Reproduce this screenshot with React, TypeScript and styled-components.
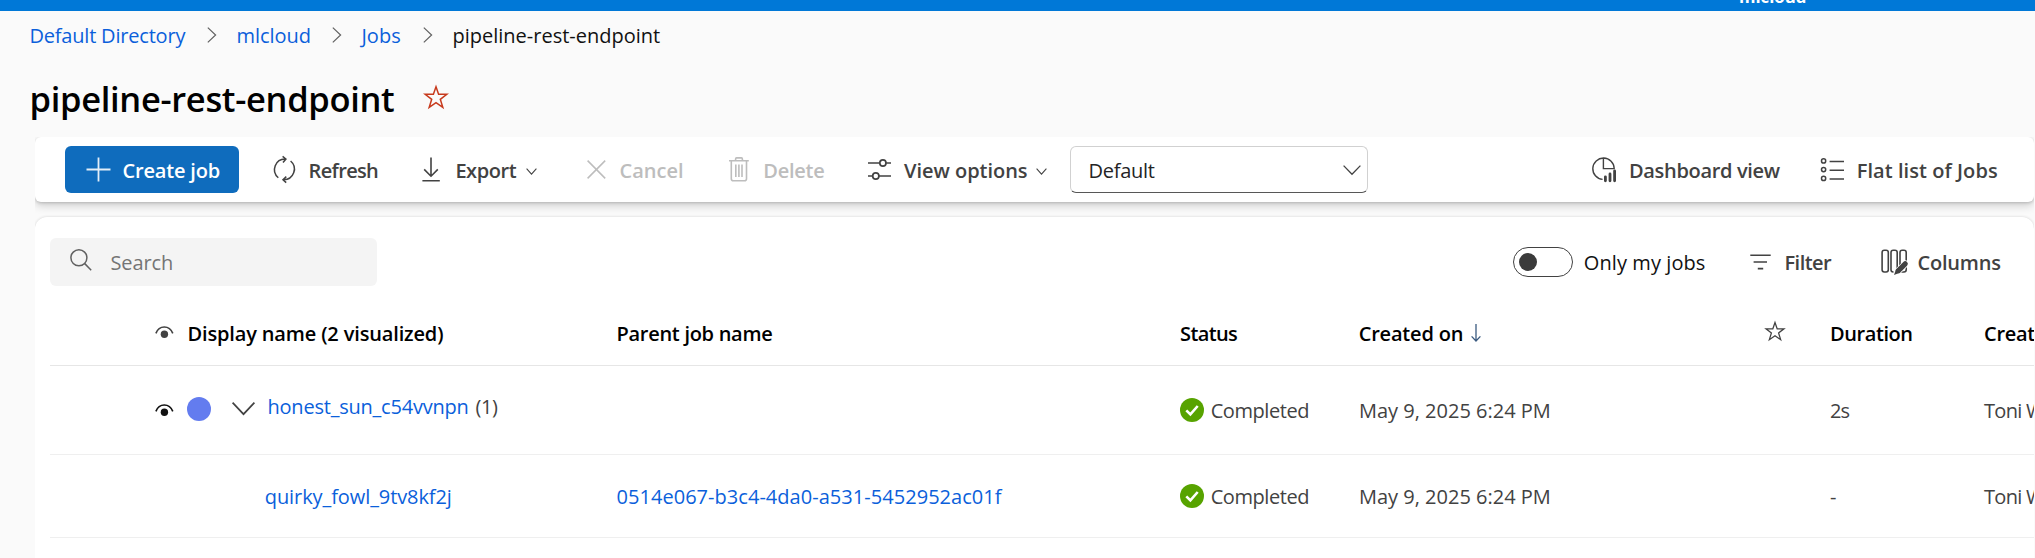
import React from "react";
import styled, { createGlobalStyle } from "styled-components";

const Global = createGlobalStyle`
  * { box-sizing: border-box; }
  html, body { margin: 0; padding: 0; background: #fafafa; overflow: hidden; }
  body { font-family: "Open Sans", "Noto Sans", sans-serif; font-size: 20px; line-height: 28px; color: #424242; }
  svg { display: block; flex: none; overflow: visible; }
`;

const Page = styled.div`
  width: 2035px;
  height: 558px;
  overflow: hidden;
  display: flex;
  flex-direction: column;
`;

const TopBar = styled.header`
  height: 11px;
  flex: none;
  background: #0078d7;
  overflow: hidden;
  display: flex;
  align-items: flex-end;
  padding: 0 0 3px 1739px;
`;

const WorkspaceName = styled.span`
  color: #fff;
  font-size: 16.8px;
  font-weight: 700;
  line-height: 23px;
`;

const Text = styled.span<{ $w?: number; $ls?: number; $bold?: boolean; $color?: string }>`
  flex: none;
  padding-top: 2px;
  white-space: nowrap;
  width: ${(p) => (p.$w ? `${p.$w}px` : "auto")};
  letter-spacing: ${(p) => p.$ls ?? 0}px;
  font-weight: ${(p) => (p.$bold ? 600 : 400)};
  color: ${(p) => p.$color ?? "inherit"};
`;

const Link = styled(Text).attrs({ as: "a" })`
  color: #0b5fdb;
  text-decoration: none;
`;

const Breadcrumbs = styled.nav`
  display: flex;
  align-items: center;
  height: 28px;
  margin: 10px 0 0 29.5px;
  flex: none;
`;

const CrumbSeparator = styled.span<{ $left: number; $right: number }>`
  margin: -1px ${(p) => p.$right}px 0 ${(p) => p.$left}px;
`;

const TitleRow = styled.div`
  display: flex;
  align-items: center;
  height: 48px;
  margin: 25px 0 15px 29.5px;
  flex: none;
`;

const Title = styled.h1`
  margin: 0;
  padding-top: 2px;
  width: 394.5px;
  font-size: 34.5px;
  line-height: 48px;
  font-weight: 600;
  letter-spacing: -0.316px;
  color: #000;
`;

const Main = styled.main`
  margin: 0 1px 0 35px;
  flex: 1;
  overflow: hidden;
  display: flex;
  flex-direction: column;
  gap: 15px;
`;

const Toolbar = styled.div`
  height: 65px;
  flex: none;
  display: flex;
  align-items: center;
  padding: 0 36px 0 30px;
  background: #fff;
  border-radius: 6px;
  box-shadow: 0 4px 9px rgba(0, 0, 0, 0.17), 0 1px 3px rgba(0, 0, 0, 0.16);
`;

const PrimaryButton = styled.button`
  width: 174px;
  height: 47px;
  flex: none;
  padding: 0 0 0 21px;
  display: flex;
  align-items: center;
  gap: 11.5px;
  border: 0;
  border-radius: 6px;
  background: #0f6cbd;
  color: #fff;
  font: inherit;
`;

const Command = styled.div<{ $before?: number; $gap: number; $disabled?: boolean; $end?: boolean }>`
  display: flex;
  align-items: center;
  flex: none;
  gap: ${(p) => p.$gap}px;
  margin-left: ${(p) => (p.$end ? "auto" : `${p.$before ?? 0}px`)};
  color: ${(p) => (p.$disabled ? "#bdbdbd" : "#424242")};
`;

const MenuCaret = styled.span`
  margin: 4px 0 0 9px;
`;

const Select = styled.div`
  width: 298px;
  height: 47px;
  flex: none;
  margin-left: 22.5px;
  padding: 0 6px 0 18px;
  display: flex;
  align-items: center;
  justify-content: space-between;
  border: 1px solid #d1d1d1;
  border-bottom-color: #575757;
  border-radius: 6px;
  color: #242424;
`;

const Content = styled.section`
  flex: 1;
  background: #fff;
  border-radius: 12px 12px 0 0;
  padding: 21px 0 0 15px;
  box-shadow: 0 0 3px rgba(0, 0, 0, 0.16);
`;

const TableTools = styled.div`
  display: flex;
  align-items: center;
  height: 48px;
  padding-right: 33px;
`;

const SearchBox = styled.div`
  width: 327px;
  height: 48px;
  border-radius: 6px;
  background: #f4f4f4;
  color: #757575;
  display: flex;
  align-items: center;
  padding-left: 20px;
  gap: 18.5px;
`;

const SearchGlyph = styled.span`
  margin-top: -5px;
  color: #616161;
`;

const Toggle = styled.span`
  width: 60px;
  height: 30px;
  border: 1.5px solid #424242;
  border-radius: 15px;
  display: flex;
  align-items: center;
  padding-left: 5px;
`;

const Knob = styled.span`
  width: 18px;
  height: 18px;
  border-radius: 50%;
  background: #3b3b3b;
`;

const Row = styled.div<{ $height: number; $head?: boolean }>`
  display: grid;
  grid-template-columns: 566px 564px 178px 407px 65px 154px 50px;
  align-items: center;
  height: ${(p) => p.$height}px;
  border-bottom: 1px solid ${(p) => (p.$head ? "#e6e6e6" : "#efefef")};
  color: ${(p) => (p.$head ? "#000" : "#424242")};
`;

const HeadRow = styled(Row)`
  margin-top: 15px;
`;

const Cell = styled.div<{ $indent?: number }>`
  display: flex;
  align-items: center;
  min-width: 0;
  white-space: nowrap;
  padding-left: ${(p) => p.$indent ?? 0}px;
`;

const EyeSlot = styled.span<{ $down?: boolean }>`
  width: 33px;
  flex: none;
  margin-top: ${(p) => (p.$down ? 0 : -2)}px;
`;

const SeriesDot = styled.span`
  width: 24px;
  height: 24px;
  flex: none;
  border-radius: 50%;
  background: #637cef;
  margin: -2px 21px 0 -1px;
`;

const ExpandSlot = styled.span`
  width: 36px;
  flex: none;
  margin-top: -3px;
`;

const JobName = styled.span`
  display: flex;
  gap: 7px;
  margin-top: -8px;
`;

const SortArrow = styled.span`
  margin: -1px 0 0 8px;
`;

const HeadStar = styled.span`
  color: #424242;
  margin-top: -4px;
`;

const TitleStar = styled.span`
  color: #c73a1d;
  margin-top: -3px;
`;

const Chevron = ({ w, h, sw = 1.4, color = "#424242" }: { w: number; h: number; sw?: number; color?: string }) => (
  <svg width={w} height={h} fill="none" stroke={color} strokeWidth={sw}>
    <path d={`M0.6 0.6 L${w / 2} ${h - 0.8} L${w - 0.6} 0.6`} />
  </svg>
);

const CrumbArrow = () => (
  <svg width="10" height="16" fill="none" stroke="#616161" strokeWidth="1.2">
    <path d="M0.8 0.6 L8.6 8 L0.8 15.4" />
  </svg>
);

const Star = ({ size, sw }: { size: number; sw: number }) => (
  <svg width={size} height={size} viewBox="0 0 24 24" fill="none" stroke="currentColor" strokeWidth={sw}>
    <path d="M12 1.8 L14.6 9.3 L22.8 9.3 L16.3 14.3 L18.8 22.4 L12 17.6 L5.2 22.4 L7.7 14.3 L1.2 9.3 L9.4 9.3 Z" />
  </svg>
);

const Eye = ({ color }: { color: string }) => (
  <svg width="19" height="12" fill="none" stroke={color} strokeWidth="1.6">
    <path d="M0.9 7.4 C2.6 2.9 5.6 1 9.3 1 C13 1 16 2.9 17.8 7.4" />
    <circle cx="9.4" cy="8.3" r="3.7" fill={color} stroke="none" />
  </svg>
);

const PlusIcon = () => (
  <svg width="25" height="25" stroke="#e3eef8" strokeWidth="1.8">
    <path d="M12.5 0.5 V24.5 M0.5 12.5 H24.5" />
  </svg>
);

const RefreshIcon = () => (
  <svg width="23" height="27" fill="none" stroke="currentColor" strokeWidth="1.5">
    <path d="M5.3 21.7 A10.6 10.6 0 0 1 12.5 3 M9.6 0.4 L12.9 3 L10 6.4" />
    <path d="M17.6 5 A10.6 10.6 0 0 1 10.6 23.7 M13.3 20.6 L10 23.7 L13.2 26.6" />
  </svg>
);

const DownloadIcon = () => (
  <svg width="18" height="25" fill="none" stroke="currentColor" strokeWidth="1.6">
    <path d="M9 0.5 V19 M2.2 12.4 L9 19.2 L15.8 12.4 M0.4 23.8 H17.8" />
  </svg>
);

const CancelIcon = () => (
  <svg width="19" height="19" fill="none" stroke="currentColor" strokeWidth="1.5">
    <path d="M0.6 0.6 L18.2 18.4 M18.2 0.6 L0.6 18.4" />
  </svg>
);

const TrashIcon = () => (
  <svg width="20" height="25" fill="none" stroke="currentColor" strokeWidth="1.6">
    <path d="M0 3.8 H19.8 M6.6 3.6 V1.9 A1 1 0 0 1 7.6 0.9 H12.4 A1 1 0 0 1 13.4 1.9 V3.6" />
    <path d="M2.3 4 V21.8 A2 2 0 0 0 4.3 23.8 H15.5 A2 2 0 0 0 17.5 21.8 V4 M6.8 7.5 V20 M9.9 7.5 V20 M13 7.5 V20" />
  </svg>
);

const OptionsIcon = () => (
  <svg width="23" height="21" fill="none" stroke="currentColor" strokeWidth="1.7">
    <path d="M0 4 H11.7 M18.1 4 H23 M0 17 H4.6 M11 17 H23" />
    <circle cx="14.9" cy="4" r="3.1" />
    <circle cx="7.8" cy="17" r="3.1" />
  </svg>
);

const DashboardIcon = () => (
  <svg width="25" height="26" fill="none" stroke="currentColor" strokeWidth="1.4">
    <path d="M10.6 22.4 A10.7 10.7 0 1 1 22.2 11.6 H11.4 V1" />
    <path d="M13.4 19.8 V23.8 M18 17 V23.8 M22.6 14 V23.8" strokeWidth="2.8" strokeLinecap="round" />
  </svg>
);

const ListIcon = () => (
  <svg width="24" height="24" fill="none" stroke="currentColor" strokeWidth="1.5">
    <circle cx="3.6" cy="2.9" r="2.1" />
    <circle cx="3.6" cy="11.6" r="2.1" />
    <circle cx="3.6" cy="20.4" r="2.1" />
    <path d="M9.6 3.4 H24 M9.6 12.2 H24 M9.6 21 H24" />
  </svg>
);

const SearchIcon = () => (
  <svg width="22" height="22" fill="none" stroke="currentColor" strokeWidth="1.5">
    <circle cx="8.9" cy="8.8" r="8" />
    <path d="M14.5 14.4 L21.2 21.2" />
  </svg>
);

const FilterIcon = () => (
  <svg width="21" height="16" fill="none" stroke="currentColor" strokeWidth="1.6">
    <path d="M0.3 1.2 H20.7 M3.6 8 H17 M7.8 14.6 H13.2" />
  </svg>
);

const ColumnsIcon = () => (
  <svg width="27" height="26" fill="none" stroke="currentColor" strokeWidth="1.6">
    <rect x="1.1" y="1.2" width="6.2" height="21.8" rx="2.2" />
    <rect x="10" y="1.2" width="6.2" height="21.8" rx="2.2" />
    <rect x="19" y="1.2" width="6.2" height="21.8" rx="2.2" />
    <path d="M16 23.2 L24.4 14.8" stroke="#fff" strokeWidth="6.8" strokeLinecap="round" />
    <path d="M17.4 21.6 L24.2 14.8" strokeWidth="5.2" strokeLinecap="round" />
    <path d="M15.2 19.8 L13 26 L19.4 23.4 Z" fill="currentColor" stroke="none" />
  </svg>
);

const CheckIcon = () => (
  <svg width="24" height="24" fill="none">
    <circle cx="12" cy="12" r="12" fill="#57a300" />
    <path d="M6.3 12.3 L10.4 16.4 L17.7 8" stroke="#fff" strokeWidth="2.6" />
  </svg>
);

const ArrowDownIcon = () => (
  <svg width="10" height="18" fill="none" stroke="#3b5b80" strokeWidth="1.3">
    <path d="M5 0 V17 M0.6 12.4 L5 17 L9.4 12.4" />
  </svg>
);

const Status = () => (
  <Cell>
    <Command $gap={6.7}>
      <CheckIcon />
      <Text $ls={-0.427}>Completed</Text>
    </Command>
  </Cell>
);

export default function App() {
  return (
    <Page>
      <Global />
      <TopBar>
        <WorkspaceName>mlcloud</WorkspaceName>
      </TopBar>
      <Breadcrumbs>
        <Link $w={156.5} $ls={-0.2}>Default Directory</Link>
        <CrumbSeparator $left={21} $right={19.5}><CrumbArrow /></CrumbSeparator>
        <Link $w={75} $ls={-0.05}>mlcloud</Link>
        <CrumbSeparator $left={20.5} $right={19.5}><CrumbArrow /></CrumbSeparator>
        <Link $w={40}>Jobs</Link>
        <CrumbSeparator $left={21} $right={20}><CrumbArrow /></CrumbSeparator>
        <Text $color="#111">pipeline-rest-endpoint</Text>
      </Breadcrumbs>
      <TitleRow>
        <Title>pipeline-rest-endpoint</Title>
        <TitleStar><Star size={24} sw={1.5} /></TitleStar>
      </TitleRow>
      <Main>
        <Toolbar>
          <PrimaryButton>
            <PlusIcon />
            <Text $bold $ls={-0.18}>Create job</Text>
          </PrimaryButton>
          <Command $before={34} $gap={12.6}>
            <RefreshIcon />
            <Text $bold $w={70} $ls={-0.65}>Refresh</Text>
          </Command>
          <Command $before={43.4} $gap={15.4}>
            <DownloadIcon />
            <Text $bold $w={62} $ls={-0.414}>Export</Text>
          </Command>
          <MenuCaret><Chevron w={11} h={7} sw={1.05} /></MenuCaret>
          <Command $before={49.6} $gap={13.6} $disabled>
            <CancelIcon />
            <Text $bold $w={63}>Cancel</Text>
          </Command>
          <Command $before={46.4} $gap={14.3} $disabled>
            <TrashIcon />
            <Text $bold $w={62} $ls={-0.238}>Delete</Text>
          </Command>
          <Command $before={42.7} $gap={13.1}>
            <OptionsIcon />
            <Text $bold $w={123} $ls={-0.029}>View options</Text>
          </Command>
          <MenuCaret><Chevron w={11} h={7} sw={1.05} /></MenuCaret>
          <Select>
            <Text $ls={-0.266}>Default</Text>
            <Chevron w={18} h={10} sw={1.3} />
          </Select>
          <Command $end $gap={12}>
            <DashboardIcon />
            <Text $bold $w={153} $ls={-0.33}>Dashboard view</Text>
          </Command>
          <Command $before={38} $gap={12.7}>
            <ListIcon />
            <Text $bold $w={141.3} $ls={0.06}>Flat list of Jobs</Text>
          </Command>
        </Toolbar>
        <Content>
          <TableTools>
            <SearchBox>
              <SearchGlyph><SearchIcon /></SearchGlyph>
              <Text $ls={-0.133}>Search</Text>
            </SearchBox>
            <Command $end $gap={10.8}>
              <Toggle><Knob /></Toggle>
              <Text $w={121} $ls={0.079} $color="#111">Only my jobs</Text>
            </Command>
            <Command $before={44.7} $gap={14}>
              <FilterIcon />
              <Text $bold $w={47.5} $ls={-0.548}>Filter</Text>
            </Command>
            <Command $before={49} $gap={9.5}>
              <ColumnsIcon />
              <Text $bold $w={83.5} $ls={-0.22}>Columns</Text>
            </Command>
          </TableTools>
          <HeadRow $height={65} $head>
            <Cell $indent={104.5}>
              <EyeSlot><Eye color="#424242" /></EyeSlot>
              <Text $bold $ls={-0.15}>Display name (2 visualized)</Text>
            </Cell>
            <Cell $indent={0.5}><Text $bold $ls={-0.284}>Parent job name</Text></Cell>
            <Cell><Text $bold $ls={-0.6}>Status</Text></Cell>
            <Cell $indent={0.7}>
              <Text $bold $ls={-0.191}>Created on</Text>
              <SortArrow><ArrowDownIcon /></SortArrow>
            </Cell>
            <Cell><HeadStar><Star size={20} sw={1.5} /></HeadStar></Cell>
            <Cell><Text $bold $ls={-0.42}>Duration</Text></Cell>
            <Cell><Text $bold $ls={-0.3}>Created by</Text></Cell>
          </HeadRow>
          <Row $height={89}>
            <Cell $indent={104.5}>
              <EyeSlot $down><Eye color="#111" /></EyeSlot>
              <SeriesDot />
              <ExpandSlot><Chevron w={23} h={13} sw={1.7} /></ExpandSlot>
              <JobName>
                <Link $ls={-0.22}>honest_sun_c54vvnpn</Link>
                <Text $ls={-0.4}>(1)</Text>
              </JobName>
            </Cell>
            <Cell />
            <Status />
            <Cell $indent={1}><Text>May 9, 2025 6:24 PM</Text></Cell>
            <Cell />
            <Cell><Text $ls={-1}>2s</Text></Cell>
            <Cell><Text $ls={-0.7}>Toni W</Text></Cell>
          </Row>
          <Row $height={83}>
            <Cell $indent={214.8}><Link $ls={-0.09}>quirky_fowl_9tv8kf2j</Link></Cell>
            <Cell $indent={0.5}><Link $ls={0.038}>0514e067-b3c4-4da0-a531-5452952ac01f</Link></Cell>
            <Status />
            <Cell $indent={1}><Text>May 9, 2025 6:24 PM</Text></Cell>
            <Cell />
            <Cell><Text>-</Text></Cell>
            <Cell><Text $ls={-0.7}>Toni W</Text></Cell>
          </Row>
        </Content>
      </Main>
    </Page>
  );
}
